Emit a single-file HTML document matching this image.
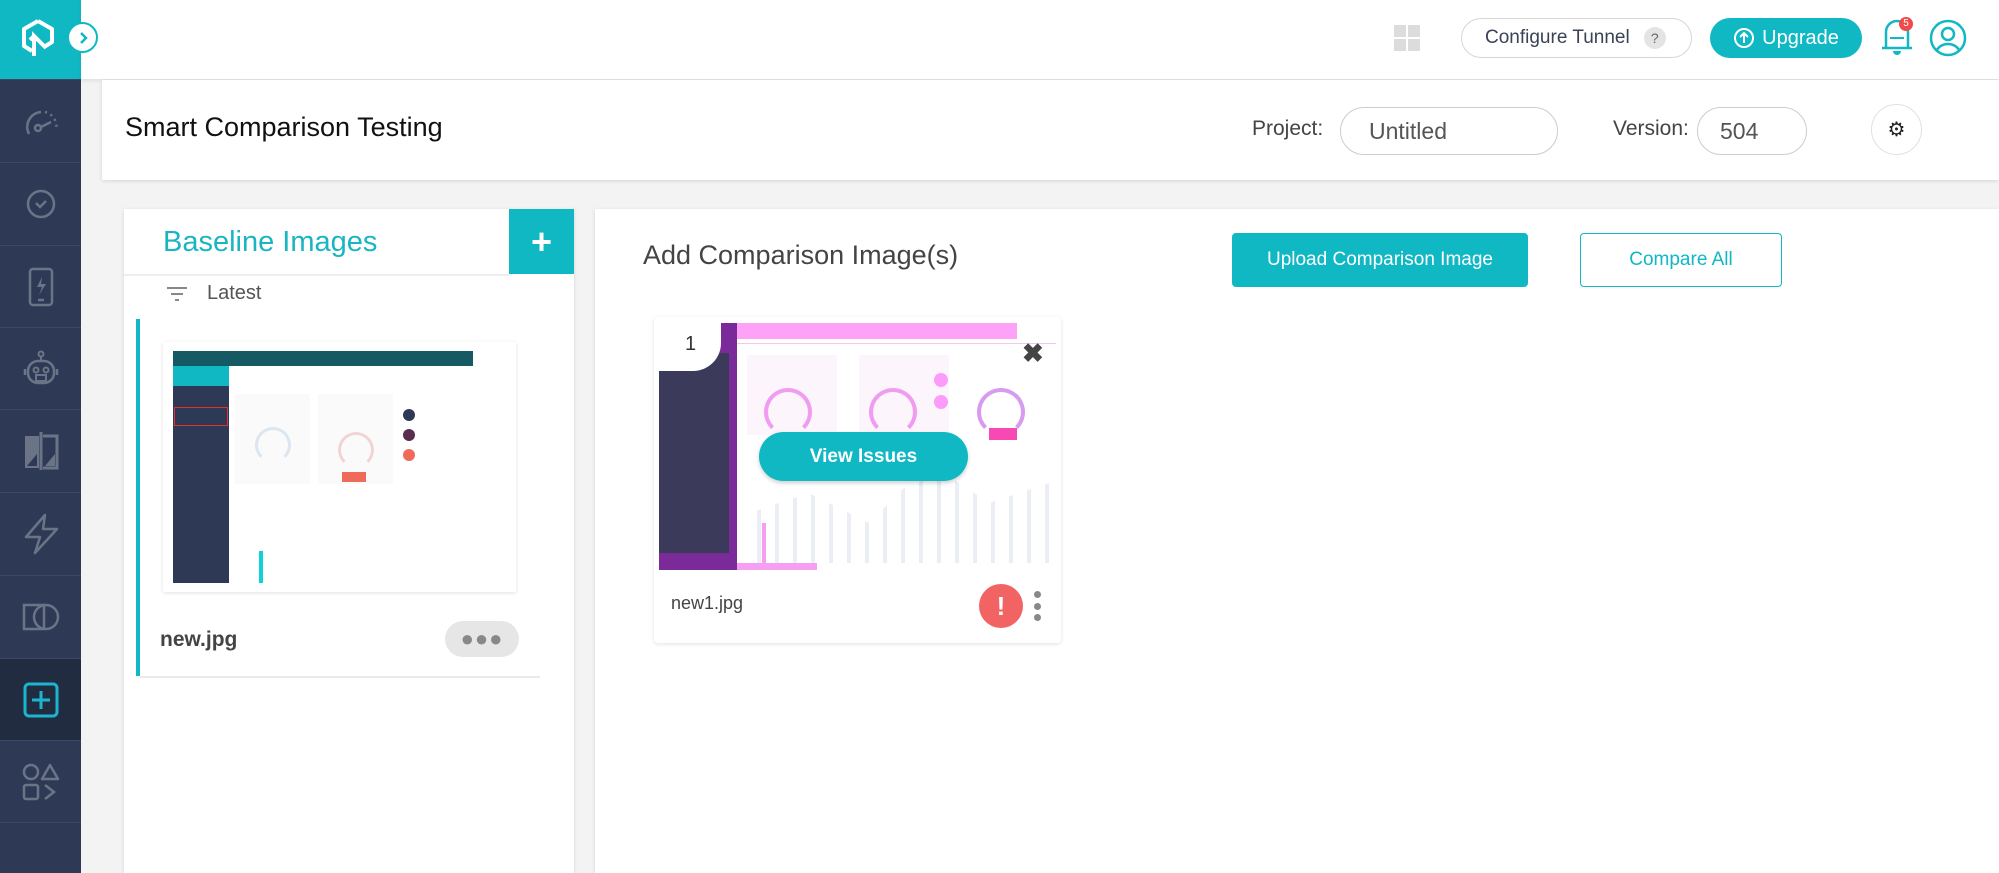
<!DOCTYPE html>
<html><head><meta charset="utf-8"><style>
*{box-sizing:border-box;margin:0;padding:0}
body{width:1999px;height:873px;overflow:hidden;background:#f3f3f4;font-family:"Liberation Sans",sans-serif;position:relative;color:#333}
.abs{position:absolute}
#side{left:0;top:0;width:81px;height:873px;background:#2e3a55}
.item{position:absolute;left:0;width:81px;height:83px;border-top:1px solid #3b4763;display:flex;align-items:center;justify-content:center}
#top{left:81px;top:0;width:1918px;height:79px;background:#fff;box-shadow:0 2px 4px rgba(0,0,0,.08)}
.pill{position:absolute;border-radius:30px;display:flex;align-items:center;justify-content:center}
.card{background:#fff;box-shadow:0 1px 4px rgba(0,0,0,.12)}
</style></head><body>
<div id="side" class="abs">
  <div class="abs" style="left:0;top:0;width:81px;height:79px;background:#10b8c4"></div>
  <svg class="abs" style="left:20px;top:18px" width="36" height="40" viewBox="0 0 36 40"><path d="M18 3 L32 11 V24 L24 29 M18 3 L4 11 V28 L12 33" fill="none" stroke="#fff" stroke-width="4" stroke-linejoin="round"/><path d="M14 38 V18 L26 30 M10 22 L14 18" fill="none" stroke="#fff" stroke-width="4"/></svg>
  <div class="item" style="top:79px;background:#2e3a55"><svg width="40" height="34" viewBox="0 0 40 34"><path d="M8 30 A15 15 0 0 1 20 8" fill="none" stroke="#6b7486" stroke-width="2.5"/><path d="M24 8 A15 15 0 0 1 35 26" fill="none" stroke="#6b7486" stroke-width="2.5" stroke-dasharray="2 4"/><circle cx="17" cy="24" r="3" fill="none" stroke="#6b7486" stroke-width="2.5"/><path d="M20 23 L30 18" stroke="#6b7486" stroke-width="2.5"/></svg></div>
  <div class="item" style="top:162px"><svg width="34" height="34" viewBox="0 0 34 34"><circle cx="17" cy="17" r="13" fill="none" stroke="#6b7486" stroke-width="2.5"/><path d="M12 16 L16 20 L22 14" fill="none" stroke="#6b7486" stroke-width="2.5"/></svg></div>
  <div class="item" style="top:245px"><svg width="26" height="40" viewBox="0 0 26 40"><rect x="2" y="2" width="22" height="36" rx="3" fill="none" stroke="#6b7486" stroke-width="2.5"/><path d="M14 10 L9 20 H14 L11 28 L18 17 H13 Z" fill="#6b7486"/><path d="M10 33 H16" stroke="#6b7486" stroke-width="2.5"/></svg></div>
  <div class="item" style="top:327px"><svg width="40" height="40" viewBox="0 0 40 40"><circle cx="20" cy="5" r="2.5" fill="none" stroke="#6b7486" stroke-width="2"/><path d="M20 8 V12" stroke="#6b7486" stroke-width="2"/><rect x="7" y="12" width="26" height="22" rx="10" fill="none" stroke="#6b7486" stroke-width="2.5"/><circle cx="15" cy="21" r="2.5" fill="none" stroke="#6b7486" stroke-width="2"/><circle cx="25" cy="21" r="2.5" fill="none" stroke="#6b7486" stroke-width="2"/><rect x="15" y="26" width="10" height="6" fill="none" stroke="#6b7486" stroke-width="2"/><path d="M4 20 V26 M36 20 V26" stroke="#6b7486" stroke-width="2.5"/></svg></div>
  <div class="item" style="top:409px"><svg width="40" height="42" viewBox="0 0 40 42"><path d="M4 6 H18 V38 H4 Z" fill="#6b7486"/><path d="M22 6 H36 V38 H22" fill="none" stroke="#6b7486" stroke-width="3"/><path d="M20 2 V40" stroke="#6b7486" stroke-width="3"/><path d="M24 36 L34 24 V36 Z" fill="#6b7486"/><path d="M6 36 L16 24 V36 Z" fill="#2e3a55"/></svg></div>
  <div class="item" style="top:492px"><svg width="40" height="42" viewBox="0 0 40 42"><path d="M24 2 L5 24 H19 L14 40 L36 16 H22 Z" fill="none" stroke="#6b7486" stroke-width="2.5" stroke-linejoin="round"/></svg></div>
  <div class="item" style="top:575px"><svg width="40" height="30" viewBox="0 0 40 30"><rect x="3" y="3" width="20" height="24" fill="none" stroke="#6b7486" stroke-width="2.5"/><circle cx="25" cy="15" r="12" fill="none" stroke="#6b7486" stroke-width="2.5"/></svg></div>
  <div class="item" style="top:658px;background:#212c40"><svg width="38" height="38" viewBox="0 0 38 38"><rect x="3" y="3" width="32" height="32" rx="4" fill="none" stroke="#1ab6d0" stroke-width="3"/><path d="M19 10 V28 M10 19 H28" stroke="#1ab6d0" stroke-width="3"/></svg></div>
  <div class="item" style="top:740px;border-bottom:1px solid #3b4763"><svg width="40" height="40" viewBox="0 0 40 40"><circle cx="10" cy="10" r="7" fill="none" stroke="#6b7486" stroke-width="2.5"/><path d="M29 3 L37 17 H21 Z" fill="none" stroke="#6b7486" stroke-width="2.5" stroke-linejoin="round"/><rect x="3" y="23" width="14" height="14" rx="2" fill="none" stroke="#6b7486" stroke-width="2.5"/><path d="M24 23 L33 30 L24 37" fill="none" stroke="#6b7486" stroke-width="2.5"/></svg></div>
</div>
<div id="top" class="abs"></div>
<div class="abs" style="left:67px;top:22px;width:31px;height:31px;border-radius:50%;background:#fff;border:2px solid #10b8c4;display:flex;align-items:center;justify-content:center"><svg width="12" height="14" viewBox="0 0 12 14"><path d="M4 2 L9 7 L4 12" fill="none" stroke="#10b8c4" stroke-width="2.5"/></svg></div>
<svg class="abs" style="left:1394px;top:25px" width="26" height="26" viewBox="0 0 26 26"><rect x="0" y="0" width="12" height="12" fill="#dcdcdc"/><rect x="14" y="0" width="12" height="12" fill="#dcdcdc"/><rect x="0" y="14" width="12" height="12" fill="#dcdcdc"/><rect x="14" y="14" width="12" height="12" fill="#dcdcdc"/></svg>
<div class="pill" style="left:1461px;top:18px;width:231px;height:40px;border:1px solid #d6d6d6;font-size:19px;color:#3a4256;justify-content:flex-start;padding-left:23px">Configure Tunnel<span style="display:inline-block;margin-left:14px;width:22px;height:22px;border-radius:50%;background:#e4e4e4;color:#666;font-size:14px;text-align:center;line-height:22px">?</span></div>
<div class="pill" style="left:1710px;top:18px;width:152px;height:40px;background:#10b8c4;color:#fff;font-size:20px"><svg width="22" height="22" viewBox="0 0 22 22" style="margin-right:7px"><circle cx="11" cy="11" r="9" fill="none" stroke="#fff" stroke-width="2"/><path d="M11 16 V6 M7 10 L11 6 L15 10" fill="none" stroke="#fff" stroke-width="2"/></svg>Upgrade</div>
<svg class="abs" style="left:1878px;top:18px" width="38" height="40" viewBox="0 0 38 40"><path d="M8 30 V14 A11 11 0 0 1 30 14 V30 Z M4 30 H34" fill="none" stroke="#10b8c4" stroke-width="2.5"/><path d="M12 20 H26" stroke="#10b8c4" stroke-width="2"/><path d="M15 33 A4 4 0 0 0 23 33 Z" fill="#10b8c4"/></svg>
<div class="abs" style="left:1899px;top:17px;width:14px;height:14px;border-radius:50%;background:#f04b4b;color:#fff;font-size:10px;text-align:center;line-height:14px">5</div>
<svg class="abs" style="left:1929px;top:19px" width="38" height="38" viewBox="0 0 38 38"><circle cx="19" cy="19" r="17" fill="none" stroke="#10b8c4" stroke-width="2.5"/><circle cx="19" cy="15" r="6" fill="none" stroke="#10b8c4" stroke-width="2.5"/><path d="M8 31 A12 10 0 0 1 30 31" fill="none" stroke="#10b8c4" stroke-width="2.5"/></svg>
<div class="abs card" style="left:102px;top:80px;width:1897px;height:100px"></div>
<div class="abs" style="left:125px;top:112px;font-size:27px;color:#111">Smart Comparison Testing</div>
<div class="abs" style="left:1252px;top:117px;font-size:21px;color:#444">Project:</div>
<div class="pill" style="left:1340px;top:107px;width:218px;height:48px;border:1.5px solid #ccc;justify-content:flex-start;padding-left:28px;font-size:23px;color:#555">Untitled</div>
<div class="abs" style="left:1613px;top:117px;font-size:21px;color:#444">Version:</div>
<div class="pill" style="left:1697px;top:107px;width:110px;height:48px;border:1.5px solid #ccc;justify-content:flex-start;padding-left:22px;font-size:23px;color:#555">504</div>
<div class="pill" style="left:1871px;top:104px;width:51px;height:51px;border:1px solid #e0e0e0;font-size:20px;color:#222">⚙</div>
<div class="abs card" style="left:124px;top:209px;width:450px;height:664px"></div>
<div class="abs" style="left:124px;top:274px;width:385px;height:2px;background:#eee"></div>
<div class="abs" style="left:163px;top:226px;font-size:29px;color:#1ab5c3">Baseline Images</div>
<div class="abs" style="left:509px;top:209px;width:65px;height:65px;background:#10b8c4;color:#fff;font-size:36px;font-weight:bold;display:flex;align-items:center;justify-content:center">+</div>
<svg class="abs" style="left:166px;top:286px" width="22" height="16" viewBox="0 0 22 16"><path d="M1 2 H21 M5 8 H17 M9 14 H13" stroke="#888" stroke-width="2"/></svg>
<div class="abs" style="left:207px;top:282px;font-size:20px;color:#555">Latest</div>
<div class="abs" style="left:136px;top:319px;width:4px;height:357px;background:#10b8c4"></div>
<div class="abs" style="left:140px;top:676px;width:400px;height:2px;background:#eaeaea"></div>
<div class="abs card" style="left:163px;top:342px;width:353px;height:250px"></div>
<div class="abs" style="left:173px;top:351px;width:300px;height:15px;background:#155a63"></div>
<div class="abs" style="left:173px;top:366px;width:56px;height:20px;background:#10b8c4"></div>
<div class="abs" style="left:173px;top:386px;width:56px;height:197px;background:#2e3a55"></div>
<div class="abs" style="left:174px;top:407px;width:54px;height:19px;border:1px solid #d33"></div>
<div class="abs" style="left:235px;top:394px;width:75px;height:90px;background:#fafafa"></div>
<div class="abs" style="left:318px;top:394px;width:75px;height:90px;background:#fafafa"></div>
<div class="abs" style="left:255px;top:427px;width:36px;height:36px;border-radius:50%;border:3px solid #dbe6f0;border-bottom-color:transparent"></div>
<div class="abs" style="left:338px;top:432px;width:36px;height:36px;border-radius:50%;border:3px solid #f2d4d4;border-bottom-color:transparent"></div>
<div class="abs" style="left:342px;top:472px;width:24px;height:10px;background:#ef6a5a"></div>
<div class="abs" style="left:403px;top:409px;width:12px;height:12px;border-radius:50%;background:#2e3a55"></div>
<div class="abs" style="left:403px;top:429px;width:12px;height:12px;border-radius:50%;background:#5a2d4d"></div>
<div class="abs" style="left:403px;top:449px;width:12px;height:12px;border-radius:50%;background:#ef6a5a"></div>
<div class="abs" style="left:259px;top:551px;width:4px;height:32px;background:#10d0dc"></div>
<div class="abs" style="left:160px;top:628px;font-size:21px;font-weight:bold;color:#444">new.jpg</div>
<div class="pill" style="left:445px;top:621px;width:74px;height:36px;background:#e6e6e6;color:#888;font-size:22px;letter-spacing:1px">●●●</div>
<div class="abs card" style="left:595px;top:209px;width:1404px;height:664px"></div>
<div class="abs" style="left:643px;top:240px;font-size:27px;color:#444">Add Comparison Image(s)</div>
<div class="abs" style="left:1232px;top:233px;width:296px;height:54px;background:#10b8c4;border-radius:4px;color:#fff;font-size:19px;display:flex;align-items:center;justify-content:center">Upload Comparison Image</div>
<div class="abs" style="left:1580px;top:233px;width:202px;height:54px;border:1.5px solid #10b8c4;border-radius:4px;color:#10b8c4;font-size:19px;display:flex;align-items:center;justify-content:center">Compare All</div>
<div class="abs card" style="left:654px;top:317px;width:407px;height:326px;border-radius:4px"></div>
<div class="abs" style="left:659px;top:323px;width:397px;height:247px;background:#fff;overflow:hidden">
  <div class="abs" style="left:0;top:0;width:78px;height:247px;background:#7b2a9a"></div>
  <div class="abs" style="left:0;top:30px;width:70px;height:200px;background:#3b3a5a"></div>
  <div class="abs" style="left:78px;top:0;width:280px;height:16px;background:#fda2f7"></div>
  <div class="abs" style="left:78px;top:20px;width:319px;height:1px;background:#f3c6f0"></div>
  <div class="abs" style="left:88px;top:32px;width:90px;height:80px;background:#fcf5fc"></div>
  <div class="abs" style="left:200px;top:32px;width:90px;height:80px;background:#fcf5fc"></div>
  <div class="abs" style="left:105px;top:65px;width:48px;height:48px;border-radius:50%;border:4px solid #f09cf0;border-bottom-color:transparent"></div>
  <div class="abs" style="left:210px;top:65px;width:48px;height:48px;border-radius:50%;border:4px solid #f09cf0;border-bottom-color:transparent"></div>
  <div class="abs" style="left:318px;top:65px;width:48px;height:48px;border-radius:50%;border:4px solid #d79cf0;border-bottom-color:transparent"></div>
  <div class="abs" style="left:275px;top:50px;width:14px;height:14px;border-radius:50%;background:#fc9cfa"></div>
  <div class="abs" style="left:275px;top:72px;width:14px;height:14px;border-radius:50%;background:#fc9cfa"></div>
  <div class="abs" style="left:330px;top:105px;width:28px;height:12px;background:#f748b3"></div>
  <div class="abs" style="left:90px;top:140px;width:300px;height:100px;background:repeating-linear-gradient(90deg,transparent 0 8px,#eceef5 8px 12px,transparent 12px 18px);clip-path:polygon(0 50%,20% 30%,40% 60%,60% 0,80% 40%,100% 20%,100% 100%,0 100%)"></div>
  <div class="abs" style="left:78px;top:240px;width:80px;height:7px;background:#f69ef2"></div>
  <div class="abs" style="left:103px;top:200px;width:4px;height:45px;background:#f69ef2"></div>
</div>
<div class="abs" style="left:659px;top:323px;width:62px;height:48px;background:#fff;border-bottom-right-radius:28px;font-size:20px;color:#333;padding:10px 0 0 26px">1</div>
<div class="abs" style="left:1022px;top:338px;font-size:26px;color:#444;font-weight:bold">✖</div>
<div class="pill" style="left:759px;top:432px;width:209px;height:49px;background:#10b8c4;color:#fff;font-size:19px;font-weight:bold;box-shadow:0 2px 4px rgba(0,0,0,.2)">View Issues</div>
<div class="abs" style="left:671px;top:593px;font-size:18px;color:#444">new1.jpg</div>
<div class="abs" style="left:979px;top:584px;width:44px;height:44px;border-radius:50%;background:#f26464;color:#fff;font-size:26px;font-weight:bold;text-align:center;line-height:44px">!</div>
<div class="abs" style="left:1033px;top:591px;width:8px;height:30px;display:flex;flex-direction:column;justify-content:space-between;align-items:center"><i style="width:7px;height:7px;border-radius:50%;background:#888"></i><i style="width:7px;height:7px;border-radius:50%;background:#888"></i><i style="width:7px;height:7px;border-radius:50%;background:#888"></i></div>
</body></html>
